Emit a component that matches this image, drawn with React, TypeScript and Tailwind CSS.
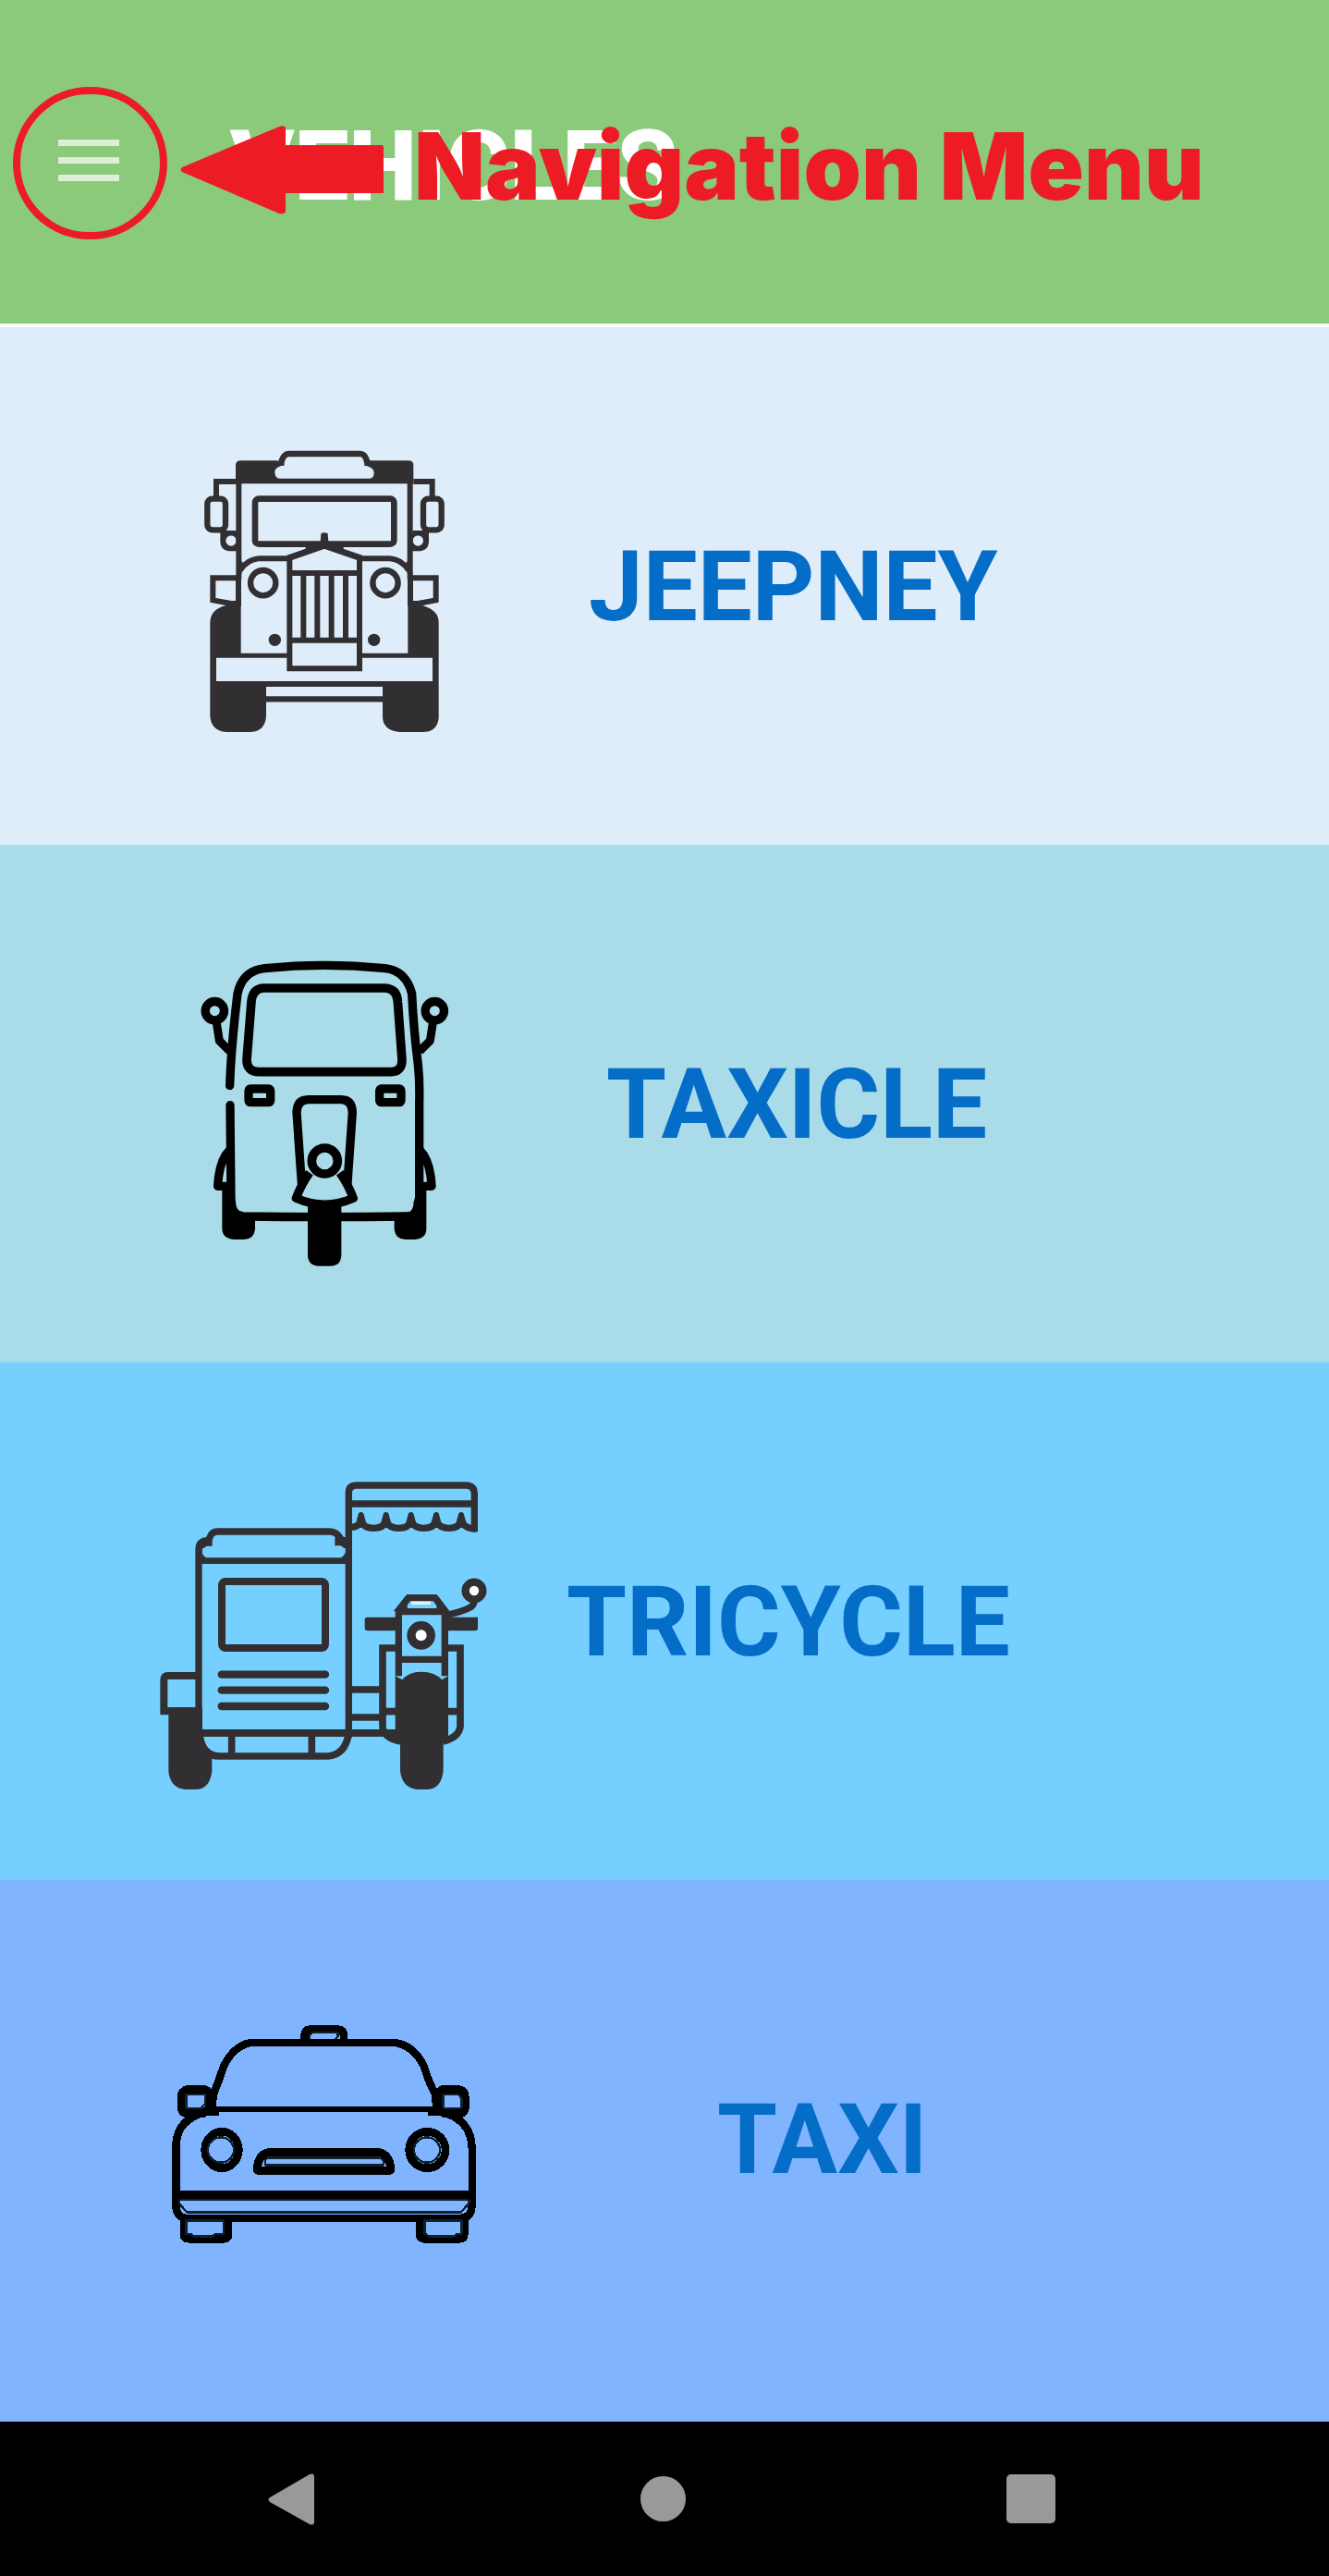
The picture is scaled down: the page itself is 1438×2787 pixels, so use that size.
import type { ReactNode } from "react";

const INK = "#322f32";

function JeepneyIcon() {
  return (
    <svg viewBox="-147 -108 1200 1200" className="size-[400px]" aria-hidden="true" fill="none" stroke={INK} strokeWidth="19">
      {/* roof */}
      <path d="M165 160V100Q165 85 182 85H300L320 100Q290 108 292 124Q293 143 308 143H600Q614 143 614 124Q614 108 582 100L600 85H725Q742 85 742 100V160Z" fill={INK} stroke="none" />
      <path d="M312 101L314 86Q322 63 338 63H570Q584 63 591 86L594 101" strokeWidth="20" />
      {/* cab sides */}
      <path d="M175 150V470M731 150V470" strokeWidth="18" />
      <path d="M165 153H102V205M742 153H803V205" strokeWidth="18" />
      <rect x="73" y="209" width="59" height="101" rx="16" />
      <rect x="774" y="209" width="59" height="101" rx="16" />
      <path d="M123 312V345Q123 371 150 371H170M168 320H130M784 312V345Q784 371 757 371H738M739 320H776" strokeWidth="16" />
      <circle cx="150" cy="345" r="23" strokeWidth="12" />
      <circle cx="757" cy="345" r="23" strokeWidth="12" />
      {/* windscreen */}
      <rect x="228" y="209" width="451" height="147" rx="12" strokeWidth="20" />
      <path d="M442 322Q453 315 464 322L466 348H515V375L453 366L392 375V348H440Z" fill={INK} stroke="none" />
      {/* hood and fenders */}
      <path d="M334 402L453 361L573 402" strokeWidth="20" />
      <path d="M338 403H240Q205 405 180 440M568 403H666Q701 405 726 440" strokeWidth="18" />
      <path d="M170 412H186L192 428L178 470H168ZM737 412H721L714 428L730 470H740Z" fill={INK} stroke="none" />
      <path d="M340 400V760H567V400M340 450H567M340 668H567" strokeWidth="18" />
      <path d="M385 450V668M430 450V668M476 450V668M522 450V668" strokeWidth="18" />
      <circle cx="254" cy="482" r="41" />
      <circle cx="651" cy="482" r="41" />
      <circle cx="292" cy="667" r="20" fill={INK} stroke="none" />
      <circle cx="614" cy="667" r="20" fill={INK} stroke="none" />
      {/* side steps */}
      <path d="M172 466H91V538L150 549H174V462M734 466H815V538L757 549H732V462" strokeWidth="18" />
      {/* wheels and bumper */}
      <path d="M135 555H182V710H340V725H102V801H804V725H567V710H724V555H771Q824 570 824 610V920Q820 966 770 966H696Q642 960 642 915V819H264V915Q260 966 210 966H134Q86 962 82 915V610Q84 565 135 555Z" fill={INK} stroke="none" />
      <path d="M260 859H646" strokeWidth="19" />
    </svg>
  );
}

function TaxicleIcon() {
  return (
    <svg viewBox="-147 -78 1200 1200" className="size-[400px]" aria-hidden="true" fill="none" stroke="#000" strokeWidth="28" strokeLinecap="round" strokeLinejoin="round">
      <path d="M146 464Q150 340 171 165Q187 91 260 83Q450 63 650 83Q718 91 737 165Q742 275 757 395Q763 450 761 520V840Q760 888 720 888Q454 892 190 888Q150 886 150 840L147 527" />
      <path d="M254 147H650Q689 150 691 190L705 380Q705 418 670 419H240Q201 418 201 380L216 190Q220 150 254 147Z" strokeWidth="29" />
      <circle cx="97" cy="221" r="30.500" />
      <circle cx="811" cy="221" r="30.500" />
      <path d="M103 260L112 318L146 352M805 260L796 318L762 352" strokeWidth="27" strokeLinecap="butt" />
      <rect x="207" y="474" width="71" height="44" rx="6" />
      <rect x="632" y="474" width="70" height="44" rx="6" />
      <path d="M379 780L363 550Q364 510 400 509H508Q543 510 544 550L528 780" />
      <circle cx="454" cy="708" r="42" strokeWidth="29" />
      <path d="M405 746Q380 780 361 829Q454 870 547 829Q528 780 503 746" strokeLinecap="butt" />
      {/* mudguards */}
      <path d="M146 672Q111 706 107 790H146M762 672Q797 706 801 790H762" strokeLinecap="butt" />
      {/* wheels */}
      <path d="M121 795H150L165 840Q165 872 192 880L228 900V930Q224 963 192 963H158Q122 960 121 928ZM784 795H757L743 840Q743 872 718 880L680 900V930Q684 963 716 963H748Q784 960 784 928Z" fill="#000" stroke="none" />
      <path d="M399 845H508V1015Q506 1049 474 1049H434Q401 1049 399 1015Z" fill="#000" stroke="none" />
    </svg>
  );
}

function TricycleIcon() {
  return (
    <svg viewBox="3 -78 1200 1200" className="size-[400px]" aria-hidden="true" fill="none" stroke={INK} strokeWidth="22">
      {/* awning */}
      <path d="M682 900V105Q682 81 708 81H1062Q1090 81 1090 108V232M682 141H1090" />
      <path d="M690 217Q712 217 722 198Q732 220 763 220Q794 220 803 198Q814 220 844 220Q876 220 884 198Q896 220 925 220Q957 220 966 198Q978 220 1007 220Q1038 220 1047 198Q1060 222 1095 222" />
      <path
        d="M714 172Q722 162 730 172L740 208H704ZM795 172Q803 162 811 172L821 208H785ZM876 172Q884 162 892 172L902 208H866ZM958 172Q966 162 974 172L984 208H948ZM1039 172Q1047 162 1055 172L1065 208H1029Z"
        fill={INK}
        stroke="none"
      />
      {/* sidecar roof */}
      <path d="M195 880V290Q195 260 226 260L236 240Q243 231 258 231H618Q640 231 650 246L660 260H680" />
      <path d="M195 272L226 248L239 256V278H222Q207 284 205 305H195ZM682 268L650 240L637 252V277H655Q671 283 672 305H682Z" fill={INK} stroke="none" />
      <path d="M205 300L226 325H650L672 300V336H205Z" fill={INK} stroke="none" />
      <path d="M207 296Q209 315 228 316H650Q669 313 671 294V285H207Z" fill="#75d0ff" stroke="none" />
      <path d="M195 326H682" strokeWidth="20" />
      <rect x="270" y="393" width="336" height="216" rx="12" strokeWidth="24" />
      <path d="M269 695H606M269 746H606M269 798H606" strokeWidth="25" strokeLinecap="round" />
      {/* sidecar base */}
      <path d="M195 885H840" strokeWidth="24" />
      <path d="M197 885Q205 960 262 960H616Q672 954 682 885M302 890V956M562 890V956" strokeWidth="23" />
      <path d="M195 699H96Q82 699 82 714V814H195" strokeWidth="24" />
      <path d="M97 802H207V895Q214 938 250 950L238 970V1010Q230 1068 184 1068H150Q103 1062 97 1010Z" fill={INK} stroke="none" />
      <path d="M692 744H784M692 834H784" />
      {/* motorcycle */}
      <path d="M836 609H792V865Q795 900 850 912M1002 609H1044V865Q1038 900 988 912M792 815H840M1000 815H1044" strokeWidth="23" />
      <path d="M734 518Q734 509 743 509H836V553H743Q734 553 734 543ZM1000 509H1101V543Q1101 553 1092 553H1000Z" fill={INK} stroke="none" />
      <path d="M844 700V490L876 446H962L994 490V700M844 491H994M844 646H994" strokeWidth="22" />
      <path d="M827 490L866 440L874 485ZM1010 490L972 440L966 485Z" fill={INK} stroke="none" />
      <path d="M886 463H948" stroke="#dff2fb" strokeWidth="10" />
      <path d="M1000 502Q1055 490 1080 475Q1091 465 1091 445" />
      <circle cx="1089" cy="423" r="28" fill="#fff" strokeWidth="25" />
      <circle cx="917" cy="568" r="32" fill="#fff" strokeWidth="28" />
      <path d="M833 700L856 712Q876 686 917 686Q963 686 984 712L1005 700V918H989V1008Q982 1068 935 1068H903Q855 1062 849 1008V918H833Z" fill={INK} stroke="none" />
    </svg>
  );
}

function TaxiIcon() {
  return (
    <svg viewBox="-27 -168 1200 1200" className="size-[400px]" aria-hidden="true" fill="none" stroke="#000" strokeWidth="26" strokeLinejoin="round" shapeRendering="crispEdges">
      <path d="M508 118V98Q510 77 526 77H618Q636 79 636 98V118" />
      <path d="M525 112V94L536 87H616V102L606 111Z" stroke="#10202f" strokeWidth="7" />
      <path d="M208 325L214 285Q232 240 246 196Q285 119 350 119H794Q860 124 896 196Q912 250 932 285L936 325" strokeWidth="25" />
      <path d="M200 336H944" strokeWidth="18" />
      <path d="M196 278L184 271H130Q108 276 108 296V334Q112 350 128 350H180L200 330ZM946 278L956 271H1008Q1030 276 1030 296V334Q1026 350 1012 350H962L944 330Z" />
      <path d="M124 332V288H185V318L174 332ZM958 332V288H1008L1018 300V332Z" stroke="#10202f" strokeWidth="7" />
      <path d="M232 344H194Q91 366 91 460V650Q93 690 130 690H1012Q1050 690 1052 650V460Q1048 366 948 344H910" strokeWidth="25" />
      <path d="M91 613H1052" strokeWidth="27" />
      <path d="M102 630H1042M102 630V642L126 670H1016L1042 642V630" stroke="#10202f" strokeWidth="7" />
      <ellipse cx="240" cy="468" rx="55" ry="59" />
      <ellipse cx="907" cy="468" rx="59" ry="59" />
      <ellipse cx="237" cy="468" rx="42" ry="41" stroke="#10202f" strokeWidth="7" />
      <ellipse cx="906" cy="468" rx="42" ry="41" stroke="#10202f" strokeWidth="7" />
      <path d="M392 476H750Q788 486 788 534H355Q355 486 392 476Z" strokeWidth="27" />
      <path d="M380 517V502L390 493H754L764 502V517Z" stroke="#10202f" strokeWidth="7" />
      <path d="M117 690V742Q118 757 134 757H246Q261 756 261 742V690M882 690V742Q884 757 898 757H1012Q1027 756 1027 742V690" />
      <path d="M124 697H246V740H220L210 748H148L138 740H124ZM898 697H1018V740H1004L994 748H912L898 738Z" stroke="#10202f" strokeWidth="7" />
    </svg>
  );
}

type Vehicle = { name: string; row: string; label: string; icon: ReactNode };

const vehicles: Vehicle[] = [
  { name: "JEEPNEY", row: "bg-[#dfedfa]", label: "ml-[86px]", icon: <JeepneyIcon /> },
  { name: "TAXICLE", row: "bg-[#a9dbe8]", label: "ml-[105px]", icon: <TaxicleIcon /> },
  { name: "TRICYCLE", row: "bg-[#75d0ff]", label: "ml-[62px]", icon: <TricycleIcon /> },
  { name: "TAXI", row: "grow bg-[#80b4ff]", label: "ml-[225px]", icon: <TaxiIcon /> },
];

function Callout() {
  return (
    <div className="pointer-events-none absolute inset-0 text-[#ed1c24]">
      <div className="absolute left-[14px] top-[94px] h-[165px] w-[167px] rounded-full border-8 border-current" />
      <svg viewBox="0 0 220 96" className="absolute left-[195px] top-[136px] h-[96px] w-[220px]" fill="currentColor" aria-hidden="true">
        <path d="M2 45L107 1Q114-1 114 3V21H218Q220 21 220 24V73H114V92Q114 96 107 95L2 50Q-1 48 2 45Z" />
      </svg>
      <p className="absolute left-[448px] top-[120px] whitespace-nowrap font-['Inter',sans-serif] text-[100px] leading-[120px] font-black">Navigation Menu</p>
    </div>
  );
}

export default function App() {
  return (
    <div className="flex min-h-screen flex-col bg-[#fafafa] font-['Roboto',sans-serif]">
      <header className="relative mb-1 flex items-start bg-[#8bc97b] pt-[121px] pb-[109px] pl-[63px]">
        <button type="button" aria-label="Open navigation menu" className="mt-[30px] flex w-[66px] flex-col gap-3">
          <span className="h-[7px] bg-[#dcefd7]" />
          <span className="h-[7px] bg-[#dcefd7]" />
          <span className="h-[7px] bg-[#dcefd7]" />
        </button>
        <h1 className="ml-[120px] text-[105px] leading-[120px] font-black text-white">VEHICLES</h1>
        <Callout />
      </header>
      <main className="flex grow flex-col">
        {vehicles.map((v) => (
          <button key={v.name} type="button" className={`flex w-full items-start py-20 pl-[151px] text-left ${v.row}`}>
            {v.icon}
            <span className={`flex h-[400px] items-center pt-1 text-[105px] font-bold text-[#046dc8] ${v.label}`}>{v.name}</span>
          </button>
        ))}
      </main>
      <nav aria-label="System" className="flex h-[167px] items-center justify-between bg-black pl-[285px] pr-[296px] text-[#999999]">
        <button type="button" aria-label="Back">
          <svg viewBox="0 0 60 60" className="size-[60px]" fill="currentColor" aria-hidden="true">
            <path d="M7 28L50 3Q55 1 55 6V54Q55 59 50 57L7 33Q4 30 7 28Z" />
          </svg>
        </button>
        <button type="button" aria-label="Home" className="size-[49px] rounded-full bg-current" />
        <button type="button" aria-label="Recent apps" className="size-[53px] rounded-[5px] bg-current" />
      </nav>
    </div>
  );
}
